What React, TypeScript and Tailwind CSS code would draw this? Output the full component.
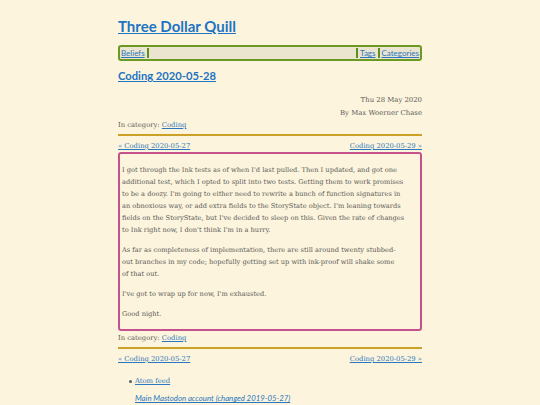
import React from "react";

const slab = { fontFamily: '"DejaVu Serif", "Liberation Serif", serif' };
const fira = { fontFamily: 'Lato, "Noto Sans", sans-serif' };

function Sep() {
  return <span className="inline-block w-[2px] h-[10px] bg-[#5f8f1c] mx-[2px]" />;
}

function PrevNext() {
  return (
    <div className="flex justify-between text-[6.8px] leading-[12px]" style={slab}>
      <a href="#" className="text-[#2a76bf] underline">« Coding 2020-05-27</a>
      <a href="#" className="text-[#2a76bf] underline">Coding 2020-05-29 »</a>
    </div>
  );
}

function Lines({ lines, last }: { lines: string[]; last?: boolean }) {
  return (
    <p className={last ? "" : "mb-[8px]"}>
      {lines.map((l, i) => (
        <span key={i} className="block whitespace-nowrap">
          {l}
        </span>
      ))}
    </p>
  );
}

export default function App() {
  return (
    <div className="min-h-[405px] bg-[#fcf4dc] text-[#5b5b5b]">
      <div className="mx-auto w-[304px] pt-[15px]">
        <h1 className="text-[15px] leading-[22px] font-bold" style={fira}>
          <a href="#" className="text-[#1d74c4] underline">Three Dollar Quill</a>
        </h1>
        <nav
          className="mt-[8px] h-[16px] flex items-center border-2 border-[#6b9a22] rounded-[3px] bg-[#ebe5cf] px-[1px] text-[8px]"
          style={fira}
        >
          <a href="#" className="text-[#2a76bf] underline">Beliefs</a>
          <Sep />
          <span className="flex-1" />
          <Sep />
          <a href="#" className="text-[#2a76bf] underline">Tags</a>
          <Sep />
          <a href="#" className="text-[#2a76bf] underline">Categories</a>
        </nav>
        <h2 className="mt-[7px] text-[11.2px] leading-[16px] font-bold" style={fira}>
          <a href="#" className="text-[#1d74c4] underline">Coding 2020-05-28</a>
        </h2>
        <div className="mt-[10px] text-right text-[6.9px] leading-[13px]" style={slab}>
          <div>Thu 28 May 2020</div>
          <div>By Max Woerner Chase</div>
        </div>
        <div className="text-[6.8px] leading-[11px]" style={slab}>
          In category: <a href="#" className="text-[#2a76bf] underline">Coding</a>
        </div>
        <div className="mt-[3px] h-[2px] bg-[#c9a227]" />
        <div className="mt-[4px]">
          <PrevNext />
        </div>
        <div
          className="border-2 border-[#c4528c] rounded-[3px] px-[2px] pt-[10px] pb-[9px] text-[6.65px] leading-[12px]"
          style={slab}
        >
          <Lines
            lines={[
              "I got through the Ink tests as of when I'd last pulled. Then I updated, and got one",
              "additional test, which I opted to split into two tests. Getting them to work promises",
              "to be a doozy. I'm going to either need to rewrite a bunch of function signatures in",
              "an obnoxious way, or add extra fields to the StoryState object. I'm leaning towards",
              "fields on the StoryState, but I've decided to sleep on this. Given the rate of changes",
              "to Ink right now, I don't think I'm in a hurry.",
            ]}
          />
          <Lines
            lines={[
              "As far as completeness of implementation, there are still around twenty stubbed-",
              "out branches in my code; hopefully getting set up with ink-proof will shake some",
              "of that out.",
            ]}
          />
          <Lines lines={["I've got to wrap up for now, I'm exhausted."]} />
          <Lines lines={["Good night."]} last />
        </div>
        <div className="mt-[1px] text-[6.8px] leading-[12px]" style={slab}>
          In category: <a href="#" className="text-[#2a76bf] underline">Coding</a>
        </div>
        <div className="mt-[3px] h-[2px] bg-[#c9a227]" />
        <div className="mt-[4px]">
          <PrevNext />
        </div>
        <ul className="mt-[10px] text-[6.8px] leading-[12px]" style={slab}>
          <li className="pl-[11px] flex items-center gap-[3px]">
            <span className="w-[3px] h-[3px] rounded-full bg-[#5b5b5b]" />
            <a href="#" className="text-[#2a76bf] underline">Atom feed</a>
          </li>
        </ul>
        <div className="mt-[5px] pl-[17px] text-[7.8px] italic leading-[12px]" style={fira}>
          <a href="#" className="text-[#2a76bf] underline">Main Mastodon account (changed 2019-05-27)</a>
        </div>
      </div>
    </div>
  );
}
